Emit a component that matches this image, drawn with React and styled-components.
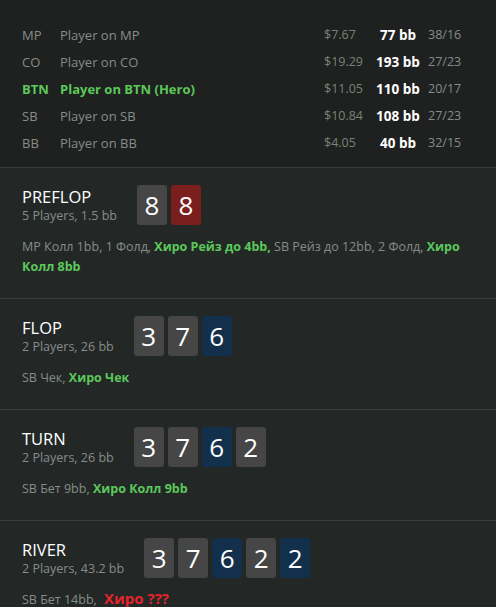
import React from "react";
import styled, { createGlobalStyle } from "styled-components";

const GlobalStyle = createGlobalStyle`
  html, body {
    margin: 0;
    padding: 0;
    background: #232827;
  }
  body {
    font-family: "Open Sans", "Noto Sans", sans-serif;
  }
`;

const players = [
  { pos: "MP", name: "Player on MP", money: "$7.67", bb: "77 bb", stats: "38/16" },
  { pos: "CO", name: "Player on CO", money: "$19.29", bb: "193 bb", stats: "27/23" },
  { pos: "BTN", name: "Player on BTN (Hero)", money: "$11.05", bb: "110 bb", stats: "20/17", hero: true },
  { pos: "SB", name: "Player on SB", money: "$10.84", bb: "108 bb", stats: "27/23" },
  { pos: "BB", name: "Player on BB", money: "$4.05", bb: "40 bb", stats: "32/15" },
];

const streets = [
  {
    title: "PREFLOP",
    sub: "5 Players, 1.5 bb",
    cards: [
      { v: "8", c: "gray" },
      { v: "8", c: "red" },
    ],
    actions: [
      { t: "MP Колл 1bb, 1 Фолд, " },
      { t: "Хиро Рейз до 4bb,", hero: true },
      { t: " SB Рейз до 12bb, 2 Фолд, " },
      { t: "Хиро Колл 8bb", hero: true },
    ],
  },
  {
    title: "FLOP",
    sub: "2 Players, 26 bb",
    cards: [
      { v: "3", c: "gray" },
      { v: "7", c: "gray" },
      { v: "6", c: "blue" },
    ],
    actions: [{ t: "SB Чек, " }, { t: "Хиро Чек", hero: true }],
  },
  {
    title: "TURN",
    sub: "2 Players, 26 bb",
    cards: [
      { v: "3", c: "gray" },
      { v: "7", c: "gray" },
      { v: "6", c: "blue" },
      { v: "2", c: "gray" },
    ],
    actions: [{ t: "SB Бет 9bb, " }, { t: "Хиро Колл 9bb", hero: true }],
  },
  {
    title: "RIVER",
    sub: "2 Players, 43.2 bb",
    cards: [
      { v: "3", c: "gray" },
      { v: "7", c: "gray" },
      { v: "6", c: "blue" },
      { v: "2", c: "gray" },
      { v: "2", c: "blue" },
    ],
    actions: [{ t: "SB Бет 14bb, " }, { t: "Хиро ???", question: true }],
  },
];

const cardColors = {
  gray: "#464646",
  red: "#7b1e1e",
  blue: "#12304c",
};

const App = () => {
  return (
    <Page>
      <GlobalStyle />
      <PlayerTable>
        {players.map((p) => (
          <PlayerRow key={p.pos} $hero={p.hero}>
            <span className="pos">{p.pos}</span>
            <span className="name">{p.name}</span>
            <span className="money">{p.money}</span>
            <span className="bb">{p.bb}</span>
            <span className="stats">{p.stats}</span>
          </PlayerRow>
        ))}
      </PlayerTable>
      {streets.map((s) => (
        <Street key={s.title}>
          <StreetHeader>
            <StreetInfo>
              <h3>{s.title}</h3>
              <span>{s.sub}</span>
            </StreetInfo>
            <Board>
              {s.cards.map((c, i) => (
                <Card key={i} $color={cardColors[c.c]}>
                  {c.v}
                </Card>
              ))}
            </Board>
          </StreetHeader>
          <Actions>
            {s.actions.map((a, i) =>
              a.question ? (
                <Question key={i}>{a.t}</Question>
              ) : a.hero ? (
                <Hero key={i}>{a.t}</Hero>
              ) : (
                <span key={i}>{a.t}</span>
              )
            )}
          </Actions>
        </Street>
      ))}
    </Page>
  );
};

const Page = styled.div`
  width: 496px;
  min-height: 607px;
  background: #232827;
`;

const PlayerTable = styled.div`
  background: #1e2120;
  padding: 21px 18px 11px 22px;
  border-bottom: 1px solid #3a3d3c;
`;

const PlayerRow = styled.div`
  display: grid;
  grid-template-columns: 38px 1fr 52px 40px 62px;
  height: 27px;
  align-items: center;
  font-size: 13px;
  color: ${({ $hero }) => ($hero ? "#5cc85a" : "#878c89")};
  font-weight: ${({ $hero }) => ($hero ? 700 : 400)};
  .money {
    color: #7c8275;
    font-weight: 400;
    font-size: 12.5px;
  }
  .bb {
    color: #ffffff;
    font-weight: 700;
    font-size: 13.5px;
    text-align: right;
    white-space: nowrap;
  }
  .stats {
    color: #878c89;
    font-weight: 400;
    font-size: 12.5px;
    padding-left: 12px;
  }
`;

const Street = styled.section`
  padding: 17px 18px 21px 22px;
  border-bottom: 1px solid #3a3d3c;
`;

const StreetHeader = styled.div`
  display: flex;
  align-items: center;
  gap: 20px;
`;

const StreetInfo = styled.div`
  display: flex;
  flex-direction: column;
  h3 {
    margin: 0;
    font-size: 16.5px;
    font-weight: 400;
    color: #ffffff;
    line-height: 21px;
  }
  span {
    font-size: 12.5px;
    color: #878c89;
    line-height: 18px;
  }
`;

const Board = styled.div`
  display: flex;
  gap: 4px;
`;

const Card = styled.div`
  width: 30px;
  height: 40px;
  border-radius: 3px;
  background: ${({ $color }) => $color};
  color: #ffffff;
  font-size: 26px;
  display: flex;
  align-items: center;
  justify-content: center;
`;

const Actions = styled.p`
  margin: 12px 0 0;
  font-size: 12.5px;
  line-height: 20px;
  color: #878c89;
`;

const Hero = styled.span`
  color: #5cc85a;
  font-weight: 700;
`;

const Question = styled.span`
  color: #e5232a;
  font-weight: 700;
  font-size: 15px;
  line-height: 0;
  margin-left: 4px;
`;

export default App;
